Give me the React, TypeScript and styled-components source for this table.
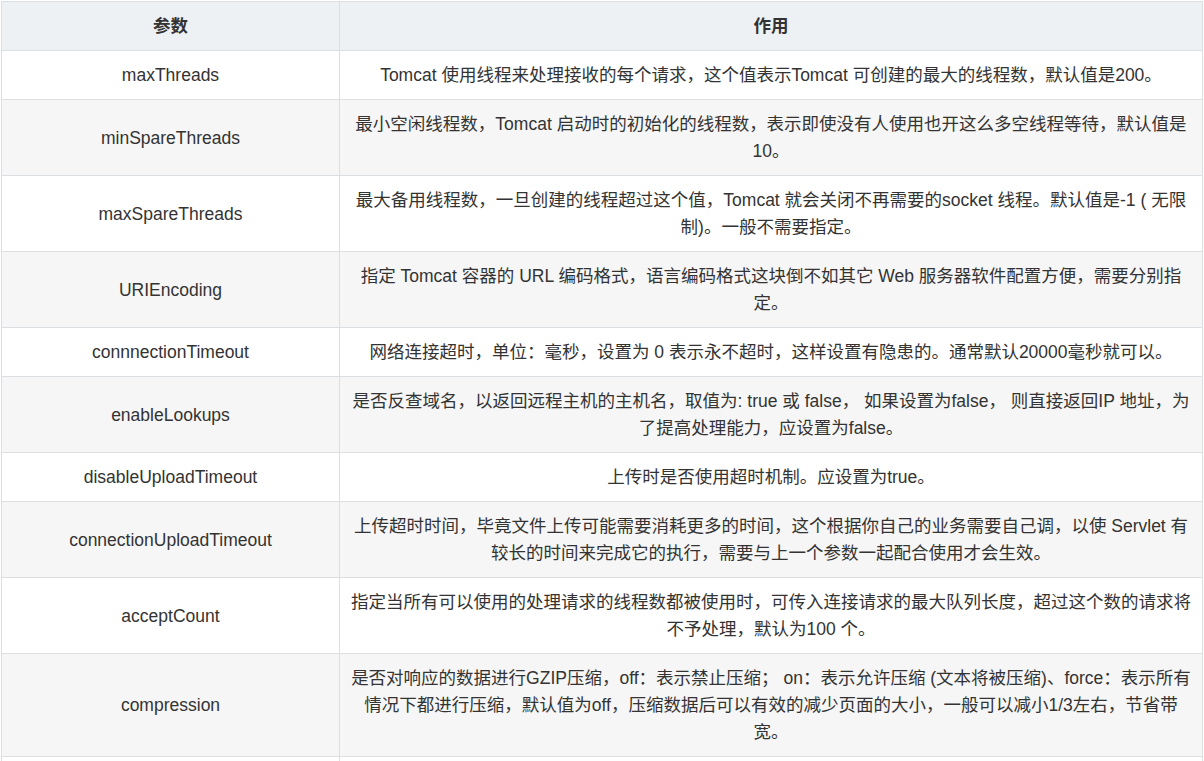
import React from "react";
import styled, { createGlobalStyle } from "styled-components";

const Global = createGlobalStyle`
  html, body { margin: 0; padding: 0; background: #fff; }
  body {
    font-family: "Liberation Sans", Arial, "Noto Sans CJK SC", sans-serif;
    color: #333;
  }
`;

const Wrap = styled.div`
  padding: 1px 0 0 1px;
`;

const Table = styled.table`
  width: 1202px;
  table-layout: fixed;
  border-collapse: collapse;
  font-size: 17.5px;
  line-height: 27px;
`;

const HeadCell = styled.th`
  background: #eef1f4;
  border: 1px solid #dcdfe2;
  font-weight: bold;
  text-align: center;
  padding: 11px 10px 10px;
  color: #333;
`;

const Row = styled.tr<{ $alt: boolean }>`
  background: ${(p) => (p.$alt ? "#f6f6f6" : "#ffffff")};
`;

const Cell = styled.td`
  border: 1px solid #dcdfe2;
  text-align: center;
  vertical-align: middle;
  padding: 11px 10px 10px;
  color: #333;
`;

const rows: [string, string][] = [
  ["maxThreads", "Tomcat 使用线程来处理接收的每个请求，这个值表示Tomcat 可创建的最大的线程数，默认值是200。"],
  ["minSpareThreads", "最小空闲线程数，Tomcat 启动时的初始化的线程数，表示即使没有人使用也开这么多空线程等待，默认值是10。"],
  ["maxSpareThreads", "最大备用线程数，一旦创建的线程超过这个值，Tomcat 就会关闭不再需要的socket 线程。默认值是-1 ( 无限制)。一般不需要指定。"],
  ["URIEncoding", "指定 Tomcat 容器的 URL 编码格式，语言编码格式这块倒不如其它 Web 服务器软件配置方便，需要分别指定。"],
  ["connnectionTimeout", "网络连接超时，单位：毫秒，设置为 0 表示永不超时，这样设置有隐患的。通常默认20000毫秒就可以。"],
  ["enableLookups", "是否反查域名，以返回远程主机的主机名，取值为: true 或 false， 如果设置为false， 则直接返回IP 地址，为了提高处理能力，应设置为false。"],
  ["disableUploadTimeout", "上传时是否使用超时机制。应设置为true。"],
  ["connectionUploadTimeout", "上传超时时间，毕竟文件上传可能需要消耗更多的时间，这个根据你自己的业务需要自己调，以使 Servlet 有较长的时间来完成它的执行，需要与上一个参数一起配合使用才会生效。"],
  ["acceptCount", "指定当所有可以使用的处理请求的线程数都被使用时，可传入连接请求的最大队列长度，超过这个数的请求将不予处理，默认为100 个。"],
  ["compression", "是否对响应的数据进行GZIP压缩，off：表示禁止压缩； on：表示允许压缩 (文本将被压缩)、force：表示所有情况下都进行压缩，默认值为off，压缩数据后可以有效的减少页面的大小，一般可以减小1/3左右，节省带宽。"],
  ["compressionMinSize", "表示压缩响应的最小值，只有当响应报文大小大于这个值的时候才会对报文进行压缩，如果开启了压缩功能，默认值就是2048。"],
];

export default function App() {
  return (
    <>
      <Global />
      <Wrap>
        <Table>
          <colgroup>
            <col style={{ width: 338 }} />
            <col />
          </colgroup>
          <thead>
            <tr>
              <HeadCell>参数</HeadCell>
              <HeadCell>作用</HeadCell>
            </tr>
          </thead>
          <tbody>
            {rows.map(([k, v], i) => (
              <Row key={k} $alt={i % 2 === 1}>
                <Cell>{k}</Cell>
                <Cell>{v}</Cell>
              </Row>
            ))}
          </tbody>
        </Table>
      </Wrap>
    </>
  );
}
